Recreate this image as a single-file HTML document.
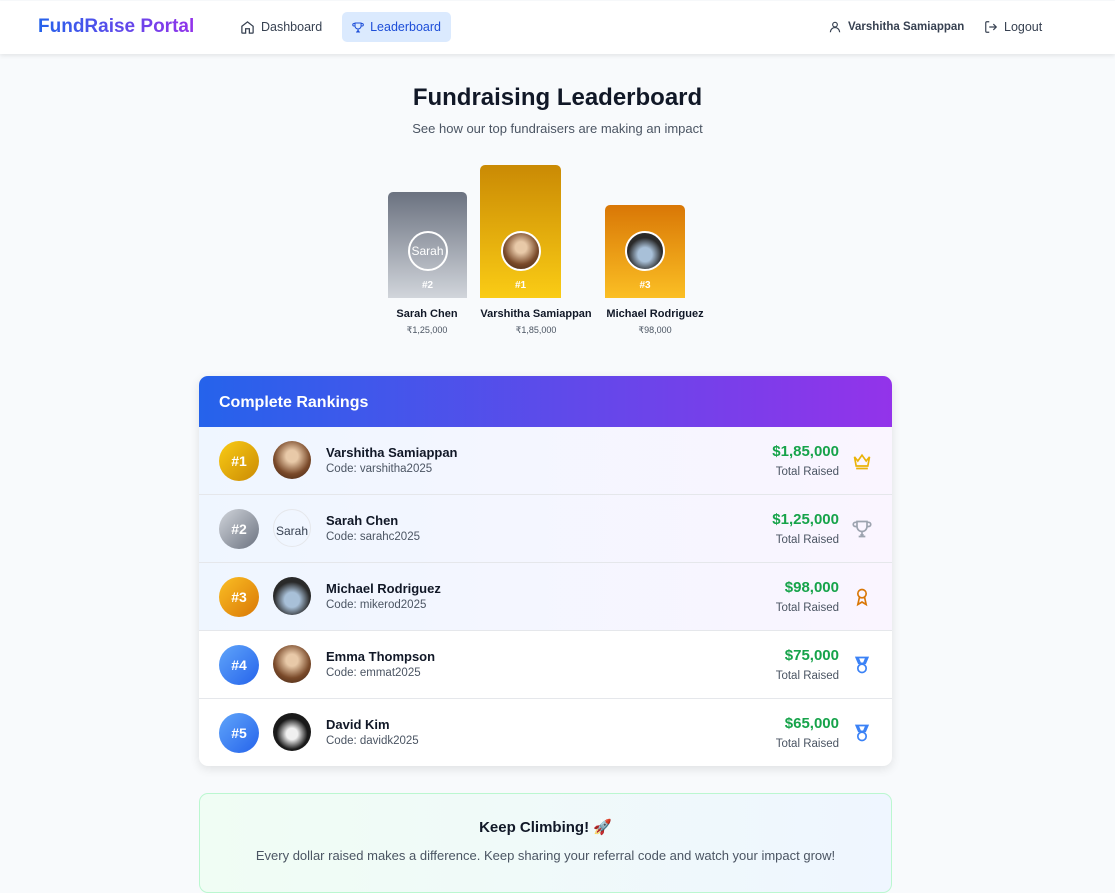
<!DOCTYPE html>
<html><head><meta charset="utf-8"><style>
*{box-sizing:border-box;margin:0;padding:0}
body{width:1115px;height:884px;overflow:hidden;background:#f8fafc;font-family:"Liberation Sans",sans-serif;color:#111827;position:relative}
.nav{position:absolute;left:0;top:1px;width:1115px;height:53px;background:#fff;box-shadow:0 2px 4px rgba(0,0,0,.08)}
.logo{position:absolute;left:38px;top:15px;font-size:19px;font-weight:bold;background:linear-gradient(90deg,#2563eb,#9333ea);-webkit-background-clip:text;color:transparent}
.ni{position:absolute;top:11px;height:30px;display:flex;align-items:center;font-size:12.5px;color:#374151;gap:6px;padding:0 10px;border-radius:5px}
h1{position:absolute;top:84px;width:100%;text-align:center;font-size:24px}
.sub{position:absolute;top:121px;width:100%;text-align:center;font-size:13px;color:#4b5563}
.pod{position:absolute;border-radius:5px 5px 0 0}
.pav{position:absolute;width:40px;height:40px;border-radius:50%;border:2px solid #fff;left:50%;margin-left:-20px}
.prk{position:absolute;width:100%;text-align:center;color:#fff;font-weight:bold;font-size:10px;bottom:7px}
.pn{position:absolute;text-align:center;font-size:11px;font-weight:bold;width:140px}
.pa{position:absolute;text-align:center;font-size:9px;color:#4b5563;width:140px}
.card{position:absolute;left:199px;top:376px;width:693px;height:390px;background:#fff;border-radius:9px;box-shadow:0 3px 10px rgba(0,0,0,.1);overflow:hidden}
.ch{height:51px;background:linear-gradient(90deg,#2563eb,#9333ea);color:#fff;font-weight:bold;font-size:16px;padding:18px 20px}
.row{position:relative;height:68px;border-bottom:1px solid #e5e7eb}
.top{background:linear-gradient(90deg,#eff6ff,#faf5ff)}
.bd{position:absolute;left:20px;top:14px;width:40px;height:40px;border-radius:50%;color:#fff;font-weight:bold;font-size:14px;text-align:center;line-height:40px}
.av{position:absolute;left:74px;top:14px;width:38px;height:38px;border-radius:50%}
.nm{position:absolute;left:127px;top:18px;font-size:13px;font-weight:bold}
.cd{position:absolute;left:127px;top:36px;font-size:11.5px;color:#4b5563}
.amt{position:absolute;right:53px;top:16px;font-size:15px;font-weight:bold;color:#16a34a}
.tr{position:absolute;right:53px;top:39px;font-size:11.5px;color:#4b5563}
.ic{position:absolute;right:20px;top:24px}
.foot{position:absolute;left:199px;top:793px;width:693px;height:100px;border:1px solid #bbf7d0;border-radius:9px;background:linear-gradient(90deg,#f0fdf4,#eff6ff);text-align:center}
</style></head><body>
<div class="nav">
<div class="logo">FundRaise Portal</div>
<div class="ni" style="left:230px"><svg width="15" height="15" viewBox="0 0 24 24" fill="none" stroke="#374151" stroke-width="2"><path d="M3 10l9-7 9 7v10a1 1 0 01-1 1h-5v-7H9v7H4a1 1 0 01-1-1z"/></svg>Dashboard</div>
<div class="ni" style="left:342px;width:109px;background:#dbeafe;color:#1d4ed8"><svg width="15" height="15" viewBox="0 0 24 24" fill="none" stroke="#1d4ed8" stroke-width="2"><path d="M6 9H4a2 2 0 010-5h2M18 9h2a2 2 0 000-5h-2M6 3h12v6a6 6 0 01-12 0zM12 15v4M8 21h8M10 19h4"/></svg>Leaderboard</div>
<div class="ni" style="left:818px;font-weight:bold;color:#374151;font-size:11.5px"><svg width="14" height="14" viewBox="0 0 24 24" fill="none" stroke="#374151" stroke-width="2"><circle cx="12" cy="8" r="4"/><path d="M4 21a8 8 0 0116 0"/></svg>Varshitha Samiappan</div>
<div class="ni" style="left:974px"><svg width="14" height="14" viewBox="0 0 24 24" fill="none" stroke="#374151" stroke-width="2"><path d="M9 21H5a2 2 0 01-2-2V5a2 2 0 012-2h4M16 17l5-5-5-5M21 12H9"/></svg>Logout</div>
</div>
<h1>Fundraising Leaderboard</h1>
<div class="sub">See how our top fundraisers are making an impact</div>

<div class="pod" style="left:388px;top:192px;width:79px;height:106px;background:linear-gradient(#6b7280,#d1d5db)"><div class="pav" style="top:39px;color:#fff;font-size:12px;line-height:36px;text-align:center">Sarah</div><div class="prk">#2</div></div>
<div class="pod" style="left:480px;top:165px;width:81px;height:133px;background:linear-gradient(#ca8a04,#facc15)"><div class="pav" style="top:66px;background:radial-gradient(circle at 50% 40%,#e8c9a8 20%,#7a4a2a 60%,#3a2010)"></div><div class="prk">#1</div></div>
<div class="pod" style="left:605px;top:205px;width:80px;height:93px;background:linear-gradient(#d97706,#fbbf24)"><div class="pav" style="top:26px;background:radial-gradient(circle at 50% 60%,#a8c0d8 25%,#2a2a2a 60%)"></div><div class="prk">#3</div></div>
<div class="pn" style="left:357px;top:308px">Sarah Chen</div><div class="pa" style="left:357px;top:325px">₹1,25,000</div>
<div class="pn" style="left:466px;top:308px">Varshitha Samiappan</div><div class="pa" style="left:466px;top:325px">₹1,85,000</div>
<div class="pn" style="left:585px;top:308px">Michael Rodriguez</div><div class="pa" style="left:585px;top:325px">₹98,000</div>

<div class="card">
<div class="ch">Complete Rankings</div>
<div class="row top"><div class="bd" style="background:linear-gradient(135deg,#facc15,#ca8a04)">#1</div><div class="av" style="background:radial-gradient(circle at 50% 40%,#e8c9a8 20%,#7a4a2a 60%,#3a2010)"></div><div class="nm">Varshitha Samiappan</div><div class="cd">Code: varshitha2025</div><div class="amt">$1,85,000</div><div class="tr">Total Raised</div>
<svg class="ic" width="20" height="20" viewBox="0 0 24 24" fill="none" stroke="#eab308" stroke-width="2"><path d="M3 7l4 5 5-7 5 7 4-5-2 11H5zM5 21h14"/></svg></div>
<div class="row top"><div class="bd" style="background:linear-gradient(135deg,#d1d5db,#6b7280)">#2</div><div class="av" style="border:1px solid #e5e7eb;font-size:12px;line-height:42px;text-align:center;color:#374151">Sarah</div><div class="nm">Sarah Chen</div><div class="cd">Code: sarahc2025</div><div class="amt">$1,25,000</div><div class="tr">Total Raised</div>
<svg class="ic" width="20" height="20" viewBox="0 0 24 24" fill="none" stroke="#9ca3af" stroke-width="2"><path d="M6 9H4a2 2 0 010-5h2M18 9h2a2 2 0 000-5h-2M6 3h12v6a6 6 0 01-12 0zM12 15v4M8 21h8M10 19h4"/></svg></div>
<div class="row top"><div class="bd" style="background:linear-gradient(135deg,#fbbf24,#d97706)">#3</div><div class="av" style="background:radial-gradient(circle at 50% 60%,#a8c0d8 25%,#2a2a2a 60%)"></div><div class="nm">Michael Rodriguez</div><div class="cd">Code: mikerod2025</div><div class="amt">$98,000</div><div class="tr">Total Raised</div>
<svg class="ic" width="20" height="20" viewBox="0 0 24 24" fill="none" stroke="#d97706" stroke-width="2"><circle cx="12" cy="8" r="5"/><path d="M9 12l-2 9 5-3 5 3-2-9"/></svg></div>
<div class="row"><div class="bd" style="background:linear-gradient(135deg,#60a5fa,#2563eb)">#4</div><div class="av" style="background:radial-gradient(circle at 50% 40%,#e8c9a8 20%,#7a4a2a 60%,#3a2010)"></div><div class="nm">Emma Thompson</div><div class="cd">Code: emmat2025</div><div class="amt">$75,000</div><div class="tr">Total Raised</div>
<svg class="ic" width="20" height="20" viewBox="0 0 24 24" fill="none" stroke="#3b82f6" stroke-width="2"><path d="M7 3l3 7M17 3l-3 7M5 3h14l-3 7H8z"/><circle cx="12" cy="16" r="5"/></svg></div>
<div class="row" style="border:none"><div class="bd" style="background:linear-gradient(135deg,#60a5fa,#2563eb)">#5</div><div class="av" style="background:radial-gradient(circle at 50% 55%,#f0f0f0 20%,#1a1a1a 55%)"></div><div class="nm">David Kim</div><div class="cd">Code: davidk2025</div><div class="amt">$65,000</div><div class="tr">Total Raised</div>
<svg class="ic" width="20" height="20" viewBox="0 0 24 24" fill="none" stroke="#3b82f6" stroke-width="2"><path d="M7 3l3 7M17 3l-3 7M5 3h14l-3 7H8z"/><circle cx="12" cy="16" r="5"/></svg></div>
</div>

<div class="foot"><div style="margin-top:24px;font-size:15px;font-weight:bold">Keep Climbing! 🚀</div><div style="margin-top:12px;font-size:13px;color:#4b5563">Every dollar raised makes a difference. Keep sharing your referral code and watch your impact grow!</div></div>
</body></html>
